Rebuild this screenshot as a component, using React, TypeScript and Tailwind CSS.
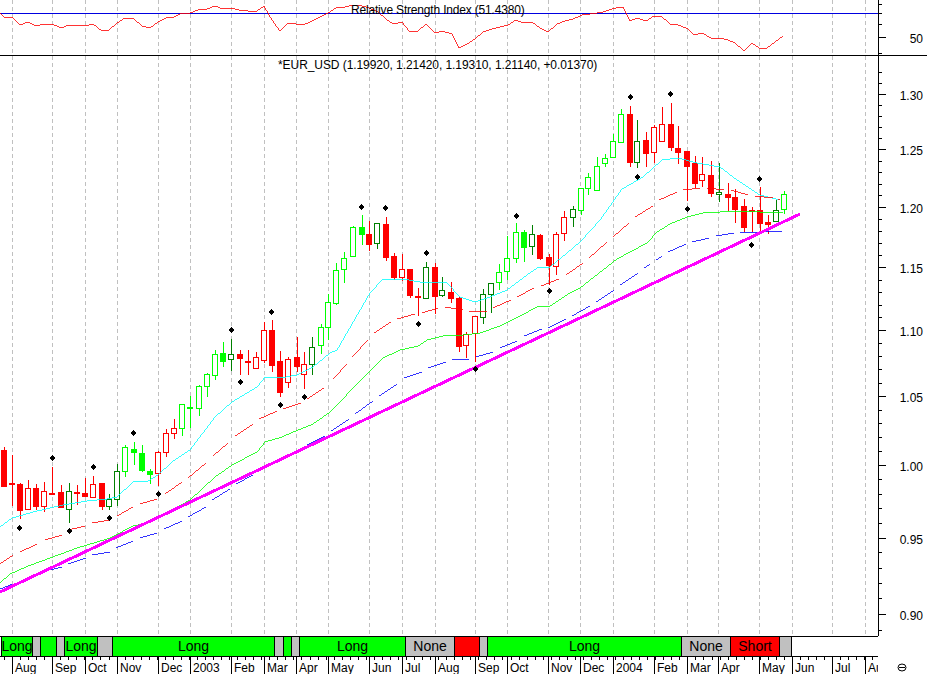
const grid = [12, 52, 85, 117, 158, 190, 231, 264, 296, 328, 369, 402, 435, 475, 507, 548, 580, 613, 654, 687, 718, 759, 792, 832, 865];
const months = ["Aug", "Sep", "Oct", "Nov", "Dec", "2003", "Feb", "Mar", "Apr", "May", "Jun", "Jul", "Aug", "Sep", "Oct", "Nov", "Dec", "2004", "Feb", "Mar", "Apr", "May", "Jun", "Jul", "Au"];

// x, wick top, body top, body bottom, wick bottom, kind
type Candle = [number, number, number, number, number, string];
const candles: Candle[] = [
  [4, 447, 450, 486, 487, "F"], [12, 455, 483, 484, 506, "F"], [20, 483, 484, 510, 519, "F"], [28, 480, 488, 509, 510, "R"],
  [36, 484, 488, 506, 510, "F"], [44, 482, 491, 506, 512, "R"], [52, 467, 493, 494, 494, "F"], [61, 485, 492, 507, 508, "F"],
  [69, 483, 491, 509, 523, "D"], [77, 485, 492, 493, 505, "F"], [85, 478, 493, 496, 497, "F"], [93, 476, 484, 497, 498, "R"],
  [102, 483, 483, 506, 510, "F"], [109, 494, 499, 506, 510, "D"], [117, 464, 471, 499, 506, "D"], [125, 445, 447, 471, 477, "G"],
  [134, 442, 449, 452, 465, "L"], [142, 445, 453, 470, 472, "L"], [150, 469, 471, 474, 484, "L"], [158, 451, 452, 473, 486, "R"],
  [166, 429, 433, 452, 457, "R"], [174, 419, 428, 433, 439, "R"], [182, 404, 404, 428, 436, "G"], [190, 396, 407, 408, 428, "G"],
  [199, 385, 386, 408, 416, "G"], [207, 373, 374, 386, 397, "G"], [215, 350, 354, 375, 380, "G"], [223, 342, 353, 361, 367, "L"],
  [231, 339, 354, 359, 371, "D"], [240, 350, 354, 358, 375, "F"], [248, 350, 361, 362, 375, "F"], [256, 352, 357, 368, 369, "R"],
  [264, 322, 330, 360, 363, "R"], [272, 320, 330, 365, 372, "F"], [280, 351, 361, 392, 397, "F"], [288, 357, 359, 382, 388, "R"],
  [297, 337, 357, 366, 372, "F"], [304, 352, 364, 374, 389, "R"], [312, 337, 347, 364, 375, "D"], [321, 324, 327, 345, 354, "G"],
  [328, 294, 302, 327, 340, "G"], [336, 263, 270, 303, 305, "G"], [344, 252, 258, 269, 283, "G"], [353, 226, 227, 256, 257, "G"],
  [362, 215, 227, 234, 245, "L"], [369, 221, 234, 244, 251, "F"], [377, 223, 223, 243, 249, "D"], [386, 217, 224, 257, 261, "F"],
  [394, 253, 256, 277, 280, "F"], [402, 254, 269, 277, 281, "R"], [410, 269, 269, 295, 298, "F"], [418, 288, 296, 297, 316, "F"],
  [426, 262, 267, 298, 299, "D"], [435, 263, 267, 296, 314, "F"], [442, 277, 290, 295, 297, "D"], [451, 282, 292, 298, 303, "F"],
  [459, 297, 298, 346, 352, "F"], [466, 332, 334, 345, 358, "R"], [475, 316, 316, 333, 362, "R"], [483, 289, 294, 317, 324, "D"],
  [491, 283, 283, 294, 313, "D"], [499, 264, 272, 282, 290, "G"], [507, 236, 258, 271, 280, "G"], [516, 223, 232, 258, 263, "G"],
  [524, 230, 232, 247, 262, "L"], [532, 225, 234, 246, 255, "D"], [540, 234, 235, 258, 260, "F"], [549, 254, 257, 265, 285, "F"],
  [556, 232, 234, 266, 275, "R"], [564, 211, 217, 233, 241, "R"], [573, 206, 209, 217, 227, "D"], [581, 188, 188, 210, 215, "G"],
  [588, 173, 177, 188, 195, "G"], [597, 157, 166, 190, 191, "G"], [605, 154, 158, 163, 167, "G"], [613, 134, 141, 157, 157, "G"],
  [621, 109, 114, 142, 143, "G"], [630, 106, 114, 162, 167, "F"], [637, 120, 141, 162, 168, "D"], [646, 132, 140, 153, 167, "F"],
  [654, 125, 127, 152, 163, "R"], [662, 107, 124, 141, 141, "R"], [671, 103, 124, 147, 151, "F"], [678, 126, 148, 152, 164, "F"],
  [687, 151, 151, 166, 201, "F"], [695, 156, 163, 183, 188, "F"], [702, 157, 174, 180, 187, "R"], [711, 161, 175, 193, 197, "F"],
  [719, 163, 192, 194, 202, "D"], [728, 183, 194, 197, 211, "F"], [735, 189, 197, 209, 223, "F"], [744, 199, 206, 227, 232, "F"],
  [752, 207, 210, 211, 232, "F"], [760, 187, 210, 223, 233, "F"], [768, 215, 222, 224, 234, "F"], [776, 200, 210, 221, 222, "D"],
  [784, 191, 194, 209, 214, "G"],
];

const candleColor: Record<string, string> = { F: "#ff0000", R: "#ff0000", G: "#00ff00", L: "#00ff00", D: "#008000" };

const diamonds = [
  [19, 528], [52, 458], [69, 531], [93, 467], [109, 518], [133, 433], [158, 494], [231, 330], [240, 382], [271, 312], [280, 405], [304, 397],
  [361, 207], [385, 208], [418, 324], [426, 253], [475, 369], [516, 216], [549, 291], [630, 97], [637, 177], [670, 94], [687, 209], [751, 245], [759, 179],
];

const rsi = "0,13 4,17 12,17 20,25 28,22 36,26 44,24 52,24 61,28 69,25 77,25 85,26 93,24 102,31 109,30 117,23 125,18 134,19 142,26 150,28 158,22 166,18 174,17 182,13 190,13 198,10 207,9 215,6 223,9 231,8 239,10 248,11 257,11 264,6 272,20 280,31 288,23 296,24 305,24 310,22 320,17 328,13 336,8 345,7 353,5 362,6 369,8 378,12 386,19 393,24 402,22 409,31 418,31 426,24 435,33 442,31 452,34 459,48 467,44 476,38 483,32 492,29 500,27 508,25 516,20 523,23 532,22 540,28 548,32 557,24 565,21 573,19 582,15 590,14 603,12 612,9 620,7 623,7 630,21 637,18 646,21 654,16 661,16 670,24 678,25 688,29 694,35 702,33 711,38 720,38 728,40 735,43 744,51 752,43 759,48 767,48 775,42 783,36";

const cyanLine = "0,527 12,518 33,512 63,505 87,501 107,499 117,497 133,482 148,481 158,475 173,461 190,450 215,417 232,402 257,387 265,377 280,378 297,375 313,367 330,353 337,350 370,293 383,279 403,279 420,282 447,283 460,297 475,302 490,297 507,290 527,275 537,268 550,267 567,253 580,242 600,220 622,189 643,177 662,160 678,158 697,163 720,167 737,180 760,195 780,200";

const greenLine = "0,583 10,574 28,566 50,558 77,548 97,542 110,538 133,526 147,523 167,513 190,500 215,477 232,465 257,452 265,442 282,437 293,432 313,424 330,412 362,379 383,358 400,350 418,346 427,340 443,336 463,335 480,333 500,326 520,316 537,307 550,306 570,293 580,288 617,259 630,252 647,243 657,232 670,224 687,217 703,213 720,212 740,211 760,212 783,212";

// dashed moving averages, one string per dash
const redDashes = [
  "0,564 13,555", "20,552 37,544", "45,540 62,535", "68,530 85,526", "92,523 110,520", "117,516 133,507", "140,504 157,499", "165,494 182,482",
  "188,478 206,463", "213,456 228,443", "235,436 253,424", "259,419 277,411", "283,409 301,403", "307,399 324,388", "333,379 347,364",
  "352,357 368,340", "374,333 391,322", "397,319 415,314", "422,313 438,308", "445,307 463,310", "469,311 487,311", "493,308 511,300",
  "517,297 534,288", "541,286 559,279", "566,275 583,263", "589,258 607,242", "613,237 629,223", "635,217 653,206", "659,200 677,192",
  "683,190 700,188", "707,188 724,190", "731,190 748,195", "755,196 773,198", "778,199 780,199",
];

const blueDashes = [
  "0,589 13,584", "21,582 37,574", "45,571 62,567", "68,564 86,558", "92,555 110,552", "116,548 133,541", "140,538 157,533", "164,529 182,521",
  "188,517 206,507", "212,500 230,489", "236,484 253,475", "259,471 277,462", "283,458 301,449", "307,445 325,436", "331,431 349,419",
  "355,414 373,401", "379,396 397,384", "404,378 422,372", "428,368 446,362", "452,360 469,359", "476,357 493,352", "500,348 517,341",
  "524,336 542,329", "548,328 566,319", "572,316 590,306", "596,302 614,290", "620,285 638,273", "644,268 650,264", "656,260 662,256",
  "668,252 686,244", "692,242 709,238", "716,236 734,233", "740,233 758,232", "764,232 782,231",
];

const priceTicks = Array.from({ length: 44 }, (_, i) => 89 + i).map((cents) => ({
  cents,
  y: Math.round(94 - 1414 * Math.log(cents / 100 / 1.3)),
}));

const segments = [
  { w: 32, bg: "#00ff00", label: "Long" },
  { w: 8, bg: "#c0c0c0" },
  { w: 16, bg: "#00ff00" },
  { w: 8, bg: "#c0c0c0" },
  { w: 33, bg: "#00ff00", label: "Long" },
  { w: 15, bg: "#c0c0c0" },
  { w: 162, bg: "#00ff00", label: "Long" },
  { w: 9, bg: "#c0c0c0" },
  { w: 8, bg: "#00ff00" },
  { w: 8, bg: "#c0c0c0" },
  { w: 106, bg: "#00ff00", label: "Long" },
  { w: 49, bg: "#c0c0c0", label: "None" },
  { w: 25, bg: "#ff0000" },
  { w: 8, bg: "#c0c0c0" },
  { w: 194, bg: "#00ff00", label: "Long" },
  { w: 49, bg: "#c0c0c0", label: "None" },
  { w: 49, bg: "#ff0000", label: "Short" },
  { w: 12, bg: "#c0c0c0" },
];

function GridLines({ y1, y2 }: { y1: number; y2: number }) {
  return (
    <g stroke="#c0c0c0" strokeWidth={1} strokeDasharray="4 3">
      {grid.map((x) => (
        <line key={x} x1={x + 0.5} x2={x + 0.5} y1={y1} y2={y2} />
      ))}
    </g>
  );
}

function CandleMark({ c }: { c: Candle }) {
  const [x, wickTop, top, bottom, wickBottom, kind] = c;
  const color = candleColor[kind];
  const filled = kind === "F" || kind === "L";
  return (
    <g stroke={color} strokeWidth={1}>
      <line x1={x + 0.5} x2={x + 0.5} y1={wickTop} y2={wickBottom} />
      <rect x={x - 2.5} y={top + 0.5} width={5} height={bottom - top} fill={filled ? color : "#ffffff"} />
    </g>
  );
}

export default function App() {
  return (
    <div className="relative w-[927px] h-[674px] overflow-hidden bg-white font-['Liberation_Sans',Arial,sans-serif] text-[12px] text-black">
      {/* RSI panel */}
      <div className="relative h-[56px] border-b border-black">
        <svg width={927} height={55} viewBox="0 0 927 55" shapeRendering="crispEdges" className="block">
          <GridLines y1={0} y2={55} />
          <line x1={0} x2={878} y1={13.5} y2={13.5} stroke="#0000e0" />
          <polyline points={rsi} fill="none" stroke="#ff0000" strokeWidth={0.8} />
          <line x1={878.5} x2={878.5} y1={0} y2={55} stroke="#000" />
          {[4, 13, 24, 53].map((y) => (
            <line key={y} x1={878} x2={882} y1={y + 0.5} y2={y + 0.5} stroke="#000" />
          ))}
          <line x1={878} x2={886} y1={37.5} y2={37.5} stroke="#000" />
          <text x={923} y={43} textAnchor="end" fontSize={12}>50</text>
        </svg>
        <div className="absolute left-[351px] top-[3px] leading-[14px] tracking-[-0.18px] whitespace-nowrap">Relative Strength Index (51.4380)</div>
      </div>

      {/* Price panel */}
      <div className="relative h-[580px]">
        <svg width={927} height={580} viewBox="0 56 927 580" shapeRendering="crispEdges" className="block">
          <GridLines y1={56} y2={636} />
          {candles.map((c) => (
            <CandleMark key={c[0]} c={c} />
          ))}
          <polyline points={cyanLine} fill="none" stroke="#00ffff" strokeWidth={0.8} />
          <polyline points={greenLine} fill="none" stroke="#00ff00" strokeWidth={0.8} />
          <g fill="none" stroke="#ff0000" strokeWidth={0.8}>
            {redDashes.map((p) => (
              <polyline key={p} points={p} />
            ))}
          </g>
          <g fill="none" stroke="#0000ff" strokeWidth={0.8}>
            {blueDashes.map((p) => (
              <polyline key={p} points={p} />
            ))}
          </g>
          <line x1={0} y1={592} x2={800} y2={214} stroke="#ff00ff" strokeWidth={3} />
          {diamonds.map(([x, y]) => (
            <polygon key={`${x}-${y}`} points={`${x},${y - 3} ${x + 3},${y} ${x},${y + 3} ${x - 3},${y}`} fill="#000" />
          ))}
          <line x1={878.5} x2={878.5} y1={56} y2={636} stroke="#000" />
          {priceTicks.map((t) => (
            <line key={t.cents} x1={878} x2={t.cents % 5 === 0 ? 886 : 882} y1={t.y + 0.5} y2={t.y + 0.5} stroke="#000" />
          ))}
          {priceTicks
            .filter((t) => t.cents % 5 === 0)
            .map((t) => (
              <text key={t.cents} x={923} y={t.y + 6} textAnchor="end" fontSize={12}>
                {(t.cents / 100).toFixed(2)}
              </text>
            ))}
        </svg>
        <div className="absolute left-[278px] top-[2px] leading-[14px] tracking-[-0.07px] whitespace-nowrap">*EUR_USD (1.19920, 1.21420, 1.19310, 1.21140, +0.01370)</div>
      </div>

      {/* Position bar */}
      <div className="flex w-[878px] h-[21px] border-y border-black pl-px">
        {segments.map((s, i) => (
          <div
            key={i}
            className={`flex items-center justify-center border-r border-black text-[14px] overflow-hidden ${i === 0 ? "border-l" : ""}`}
            style={{ width: s.w, backgroundColor: s.bg }}
          >
            {s.label}
          </div>
        ))}
      </div>

      {/* Date axis */}
      <div className="flex h-[17px]">
        <svg width={878} height={17} viewBox="0 657 878 17" shapeRendering="crispEdges" className="block">
          {Array.from({ length: 110 }, (_, i) => 4 + Math.round(i * 8.04)).map((x) => (
            <line key={x} x1={x + 0.5} x2={x + 0.5} y1={657} y2={660} stroke="#000" />
          ))}
          {grid.map((x, i) => (
            <g key={x}>
              <line x1={x + 0.5} x2={x + 0.5} y1={657} y2={674} stroke="#000" />
              <text x={x + 3} y={672} fontSize={12}>{months[i]}</text>
            </g>
          ))}
        </svg>
        <div className="flex flex-1 items-center pl-[19px] pt-[3px]">
          <svg width={10} height={9} viewBox="0 0 10 9">
            <ellipse cx={5} cy={4.5} rx={4} ry={3.5} fill="none" stroke="#000" />
            <line x1={2} x2={8} y1={4.5} y2={4.5} stroke="#000" />
          </svg>
        </div>
      </div>
    </div>
  );
}
